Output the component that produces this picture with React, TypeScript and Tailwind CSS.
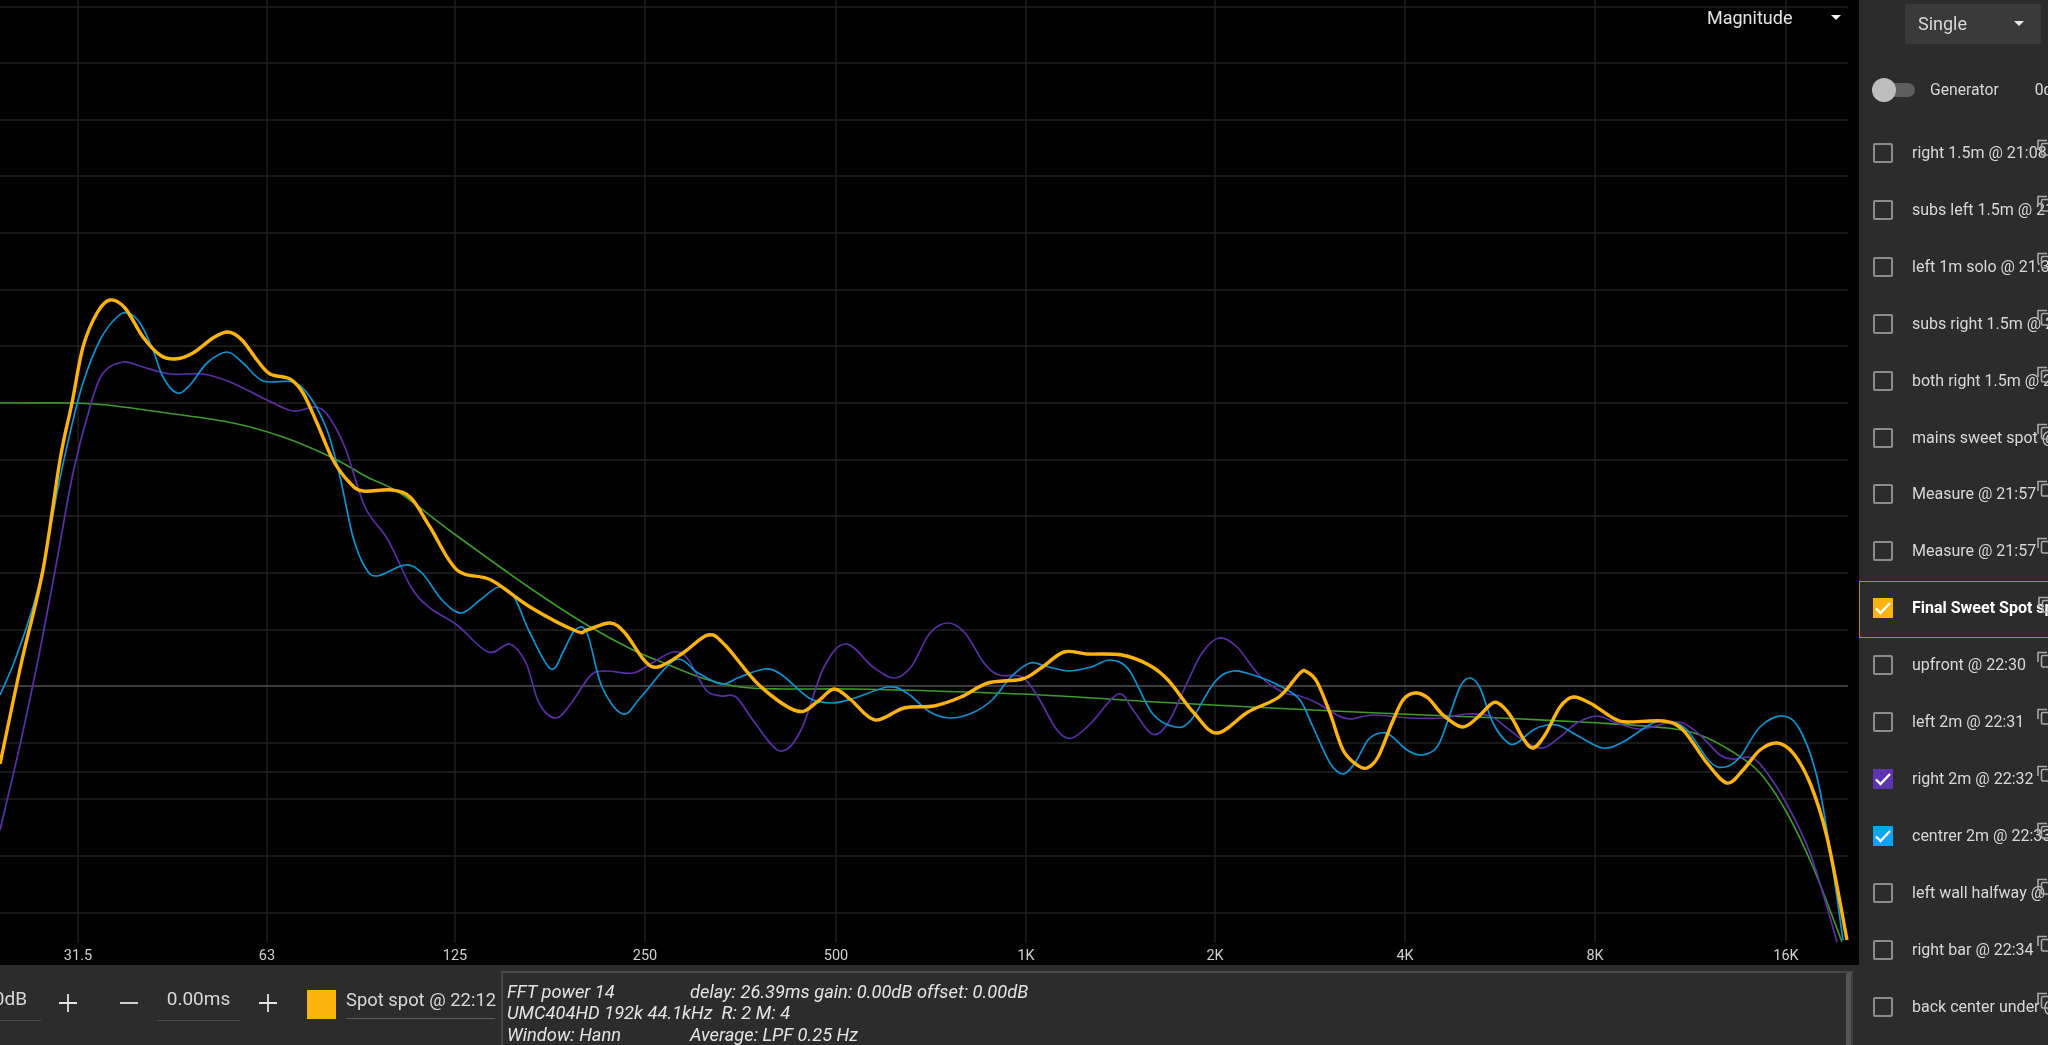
import React from "react";

type P = [number, number];

const gold: P[] = [[0,764],[22,660],[43,570],[60,460],[72,403],[83,347],[97,313],[110,300],[125,308],[143,337],[160,355],[175,359],[193,353],[213,338],[228,332],[242,340],[257,360],[270,374],[290,379],[303,393],[317,423],[333,460],[350,483],[363,491],[392,490],[411,498],[430,527],[457,570],[491,580],[530,607],[576,631],[587,630],[610,623],[625,633],[644,660],[658,667],[683,653],[708,635],[725,645],[759,685],[797,711],[817,702],[834,689],[851,700],[875,720],[904,708],[934,706],[961,697],[988,683],[1022,679],[1041,668],[1064,652],[1087,654],[1122,655],[1149,665],[1168,680],[1194,713],[1217,733],[1248,712],[1279,697],[1300,673],[1307,672],[1317,682],[1330,713],[1343,750],[1357,765],[1367,768],[1378,757],[1392,723],[1403,700],[1415,693],[1428,698],[1443,715],[1462,727],[1477,718],[1490,705],[1498,703],[1510,715],[1523,738],[1533,748],[1545,735],[1560,707],[1573,697],[1590,703],[1613,718],[1627,722],[1663,721],[1683,730],[1707,763],[1727,783],[1743,770],[1760,750],[1777,743],[1793,753],[1810,783],[1827,837],[1847,940]];

const blue: P[] = [[0,695],[15,660],[33,607],[43,567],[57,493],[70,433],[83,383],[100,340],[117,317],[128,313],[140,323],[153,350],[163,377],[177,393],[190,385],[207,363],[227,352],[243,363],[263,381],[293,382],[310,397],[327,430],[340,477],[353,537],[365,567],[377,576],[405,565],[422,573],[442,600],[461,613],[480,600],[499,587],[514,597],[530,633],[551,669],[564,650],[575,630],[587,633],[602,687],[623,714],[641,697],[675,660],[698,673],[721,684],[740,677],[765,669],[782,675],[809,698],[832,703],[855,698],[888,687],[907,693],[930,712],[950,718],[972,713],[992,700],[1011,677],[1030,663],[1045,666],[1068,671],[1091,667],[1110,660],[1129,670],[1152,713],[1175,727],[1191,720],[1214,683],[1233,671],[1259,677],[1282,687],[1300,700],[1313,727],[1330,763],[1343,774],[1355,763],[1368,740],[1380,733],[1390,735],[1407,750],[1422,755],[1437,747],[1447,723],[1460,687],[1470,678],[1480,688],[1493,723],[1507,742],[1517,743],[1533,730],[1547,725],[1560,726],[1580,737],[1603,748],[1623,742],[1653,723],[1670,722],[1687,730],[1710,762],[1725,767],[1740,757],[1760,727],[1783,716],[1800,730],[1817,777],[1830,850],[1843,940]];

const purple: P[] = [[0,830],[20,745],[38,660],[57,560],[73,473],[90,407],[103,373],[123,362],[143,367],[170,374],[203,374],[230,382],[267,400],[293,411],[317,407],[331,420],[346,450],[365,507],[388,540],[411,587],[430,608],[457,625],[488,652],[510,644],[526,663],[539,703],[556,718],[572,702],[591,675],[606,671],[633,673],[652,663],[673,652],[687,658],[706,690],[721,696],[736,697],[755,723],[780,751],[801,730],[824,667],[846,644],[873,667],[894,678],[911,667],[930,633],[948,623],[965,633],[984,663],[999,675],[1022,677],[1038,697],[1057,730],[1072,738],[1091,723],[1118,694],[1133,710],[1152,734],[1168,723],[1187,683],[1202,653],[1219,638],[1237,647],[1259,675],[1282,692],[1300,696],[1317,703],[1337,715],[1350,719],[1373,715],[1410,718],[1443,718],[1467,714],[1490,716],[1507,728],[1527,743],[1543,748],[1560,737],[1577,723],[1597,716],[1617,723],[1640,729],[1667,723],[1683,723],[1700,735],[1720,755],[1733,759],[1753,758],[1770,777],[1790,810],[1810,853],[1827,907],[1837,942]];

const green: P[] = [[0,403],[72,403],[107,405],[167,413],[233,423],[283,437],[333,458],[367,477],[400,493],[453,533],[530,588],[587,625],[633,650],[664,663],[702,678],[740,687],[782,689],[850,689],[934,691],[1041,695],[1156,702],[1271,708],[1400,714],[1500,718],[1600,723],[1667,728],[1700,735],[1733,752],[1760,773],[1787,813],[1813,867],[1842,942]];

function smooth(pts: P[]): string {
  let d = `M${pts[0][0]} ${pts[0][1]}`;
  for (let i = 0; i < pts.length - 1; i++) {
    const p0 = pts[Math.max(0, i - 1)];
    const p1 = pts[i];
    const p2 = pts[i + 1];
    const p3 = pts[Math.min(pts.length - 1, i + 2)];
    const c1x = p1[0] + (p2[0] - p0[0]) / 6;
    const c1y = p1[1] + (p2[1] - p0[1]) / 6;
    const c2x = p2[0] - (p3[0] - p1[0]) / 6;
    const c2y = p2[1] - (p3[1] - p1[1]) / 6;
    d += `C${c1x.toFixed(1)} ${c1y.toFixed(1)} ${c2x.toFixed(1)} ${c2y.toFixed(1)} ${p2[0]} ${p2[1]}`;
  }
  return d;
}

const hLines = [7, 63, 120, 176, 233, 290, 346, 403, 460, 516, 573, 630, 743, 772, 799, 856, 913];
const ticks: [number, string][] = [[78,"31.5"],[267,"63"],[455,"125"],[645,"250"],[836,"500"],[1026,"1K"],[1215,"2K"],[1405,"4K"],[1595,"8K"],[1786,"16K"]];

function Chart() {
  return (
    <svg width={1859} height={965} viewBox="0 0 1859 965" className="block">
      <rect width={1859} height={965} fill="#000" />
      {hLines.map((y) => (
        <line key={y} x1={0} x2={1848} y1={y} y2={y} stroke="#222222" strokeWidth={1.3} />
      ))}
      {ticks.map(([x]) => (
        <line key={x} x1={x} x2={x} y1={0} y2={943} stroke="#222222" strokeWidth={1.3} />
      ))}
      <line x1={0} x2={1848} y1={686} y2={686} stroke="#505050" strokeWidth={1.4} />
      <path d={smooth(green)} fill="none" stroke="#3f9a2f" strokeWidth={1.6} />
      <path d={smooth(purple)} fill="none" stroke="#5a2fa3" strokeWidth={1.7} />
      <path d={smooth(blue)} fill="none" stroke="#0e92d0" strokeWidth={1.7} />
      <path d={smooth(gold)} fill="none" stroke="#ffb30f" strokeWidth={3.4} strokeLinejoin="round" />
      {ticks.map(([x, t]) => (
        <text key={t} x={x} y={960} textAnchor="middle" fill="#d0d0d0" fontSize={14.5} fontFamily="Roboto, sans-serif">
          {t}
        </text>
      ))}
    </svg>
  );
}

function Plus() {
  return (
    <svg width={20} height={20} viewBox="0 0 20 20" className="shrink-0">
      <path d="M10 1v18M1 10h18" stroke="#e4e4e4" strokeWidth={1.8} fill="none" />
    </svg>
  );
}

function Minus() {
  return (
    <svg width={20} height={20} viewBox="0 0 20 20" className="shrink-0">
      <path d="M1 10h18" stroke="#e4e4e4" strokeWidth={1.8} fill="none" />
    </svg>
  );
}

function BottomBar() {
  return (
    <div className="flex h-20 items-start bg-[#2c2c2c] text-[#d8d8d8]">
      <div className="mt-[20px] flex h-[36px] w-[41px] justify-end overflow-hidden border-b border-[#4a4a4a] pr-[14px] text-[19px] leading-[28px] whitespace-nowrap">
        0.00dB
      </div>
      <div className="mt-[28px] ml-[17px]"><Plus /></div>
      <div className="mt-[28px] ml-[41px]"><Minus /></div>
      <div className="mt-[20px] ml-[18px] h-[36px] w-[83px] border-b border-[#4a4a4a] text-center text-[19px] leading-[28px]">
        0.00ms
      </div>
      <div className="mt-[28px] ml-[18px]"><Plus /></div>
      <div className="mt-[25px] ml-[29px] h-[29px] w-[29px] bg-[#ffb30f]" />
      <div className="mt-[20px] ml-[10px] h-[34px] w-[149px] border-b border-[#5a5a5a] text-[18.4px] leading-[30px] whitespace-nowrap">
        Spot spot @ 22:12
      </div>
      <div className="mt-[6px] mr-[6px] ml-[6px] flex h-[74px] flex-1 border-t-2 border-l-2 border-[#484848]">
        <div className="flex-1 overflow-hidden pt-[8px] pl-[4px] text-[18.3px] leading-[21.4px] text-[#e4e4e4] italic">
          <div className="flex whitespace-nowrap"><span className="w-[183px] shrink-0">FFT power 14</span><span>delay: 26.39ms gain: 0.00dB offset: 0.00dB</span></div>
          <div className="whitespace-pre">UMC404HD 192k 44.1kHz  R: 2 M: 4</div>
          <div className="flex whitespace-nowrap"><span className="w-[183px] shrink-0">Window: Hann</span><span>Average: LPF 0.25 Hz</span></div>
        </div>
        <div className="w-[5px] bg-[#555555]" />
        <div className="w-[2px] bg-[#3c3c3c]" />
      </div>
    </div>
  );
}

type Row = { label: string; color?: string; active?: boolean };
const rows: Row[] = [
  { label: "right 1.5m @ 21:08" },
  { label: "subs left 1.5m @ 21:15" },
  { label: "left 1m solo @ 21:30" },
  { label: "subs right 1.5m @ 21:40" },
  { label: "both right 1.5m @ 21:48" },
  { label: "mains sweet spot @ 21:55" },
  { label: "Measure @ 21:57" },
  { label: "Measure @ 21:57" },
  { label: "Final Sweet Spot spot @ 22:12", color: "#ffb30f", active: true },
  { label: "upfront @ 22:30" },
  { label: "left 2m @ 22:31" },
  { label: "right 2m @ 22:32", color: "#5e35b1" },
  { label: "centrer 2m @ 22:33", color: "#0ba5f5" },
  { label: "left wall halfway @ 22:34" },
  { label: "right bar @ 22:34" },
  { label: "back center under @ 22:35" },
];

function CopyIcon() {
  return (
    <svg width={14} height={17} viewBox="0 0 14 17" className="absolute top-[14px] left-[178px]">
      <path d="M1 11V1.5h9" fill="none" stroke="#a8a8a8" strokeWidth={1.6} />
      <rect x={4.5} y={4.5} width={12} height={11.5} rx={1.5} fill="none" stroke="#a8a8a8" strokeWidth={1.6} />
    </svg>
  );
}

function ListRow({ row }: { row: Row }) {
  return (
    <div
      className={
        row.active
          ? "relative mt-[1.5px] -mb-[1.5px] flex h-[56.93px] items-center overflow-hidden border border-r-0 border-[#b98a14] pb-[3px] pl-[13px]"
          : "relative flex h-[56.93px] items-center overflow-hidden pl-[14px]"
      }
    >
      {row.color ? (
        <div className="flex h-5 w-5 shrink-0 items-center justify-center" style={{ backgroundColor: row.color }}>
          <svg width={20} height={20} viewBox="0 0 20 20">
            <path d="M3 10.5l4.5 4.5L17 5" fill="none" stroke="#fff" strokeWidth={2.4} />
          </svg>
        </div>
      ) : (
        <div className="h-5 w-5 shrink-0 rounded-[2px] border-2 border-[#8c8c8c]" />
      )}
      <span
        className={
          row.active
            ? "ml-[19px] text-[16px] font-bold whitespace-nowrap text-white"
            : "ml-[19px] text-[16px] whitespace-nowrap text-[#d8d8d8]"
        }
      >
        {row.label}
      </span>
      <CopyIcon />
    </div>
  );
}

function SidePanel() {
  return (
    <div className="h-full w-[189px] shrink-0 overflow-hidden bg-[#2c2c2c] text-[#d8d8d8]">
      <div className="flex h-12 items-start pt-1 pl-[46px]">
        <div className="flex h-10 w-[136px] items-center justify-between rounded-[2px] bg-[#3a3a3a] pr-[17px] pb-[1px] pl-[13px] text-[18px]">
          <span>Single</span>
          <span className="h-0 w-0 border-x-[5px] border-t-[5px] border-x-transparent border-t-[#e8e8e8]" />
        </div>
      </div>
      <div className="flex h-[76.5px] items-center pt-[8px] whitespace-nowrap">
        <div className="relative ml-[14px] h-[14px] w-[42px] shrink-0 rounded-full bg-[#5e5e5e]">
          <div className="absolute top-[-5px] left-[-1px] h-6 w-6 rounded-full bg-[#bdbdbd]" />
        </div>
        <span className="ml-[15px] text-[15.7px]">Generator</span>
        <span className="ml-[36px] text-[15.7px]">0dB</span>
      </div>
      {rows.map((r, i) => (
        <ListRow key={i} row={r} />
      ))}
    </div>
  );
}

export default function App() {
  return (
    <div className="flex h-[1045px] w-[2048px] overflow-hidden bg-[#2c2c2c] blur-[0.5px]" style={{ fontFamily: "Roboto, 'Liberation Sans', sans-serif" }}>
      <div className="relative flex w-[1859px] shrink-0 flex-col">
        <Chart />
        <BottomBar />
        <div className="absolute top-[4px] left-[1707px] flex w-[134px] items-center justify-between text-[18px] text-[#e4e4e4]">
          <span>Magnitude</span>
          <span className="h-0 w-0 border-x-[5px] border-t-[5px] border-x-transparent border-t-[#f0f0f0]" />
        </div>
      </div>
      <SidePanel />
    </div>
  );
}
